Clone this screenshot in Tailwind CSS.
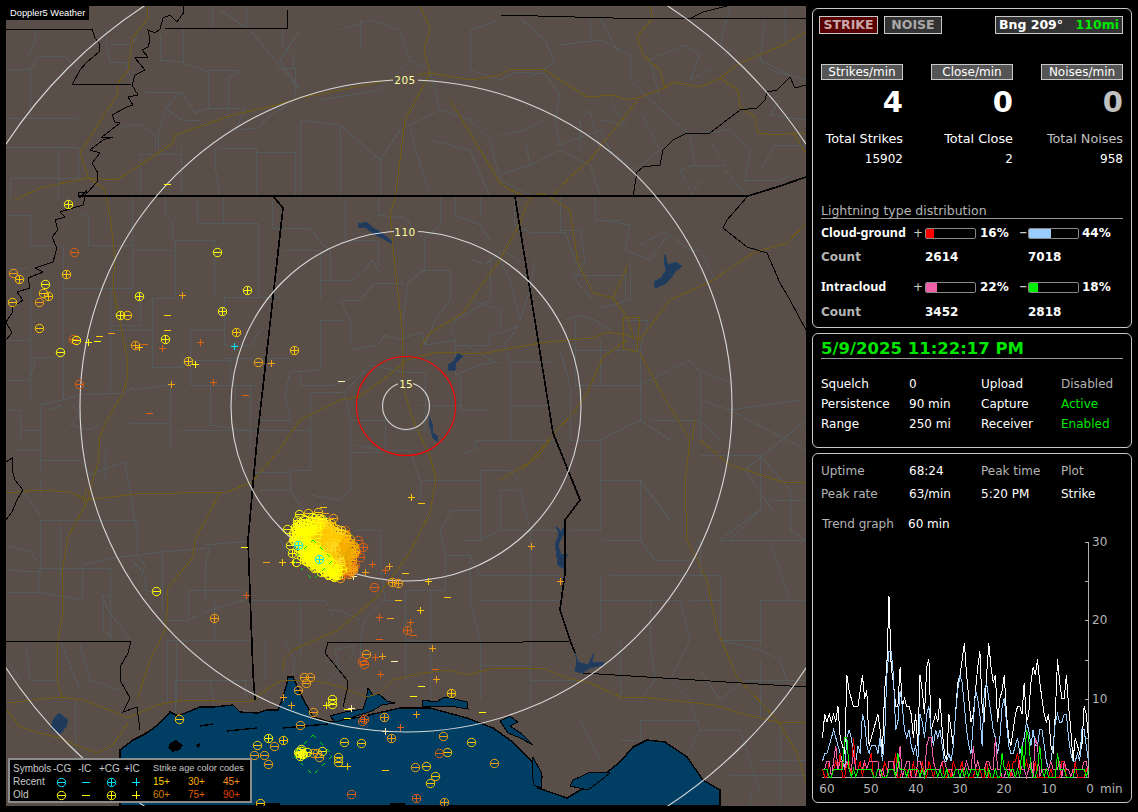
<!DOCTYPE html>
<html lang="en">
<head>
<meta charset="UTF-8">
<title>Doppler5 Weather</title>
<script src="https://cdn.jsdelivr.net/npm/@tailwindcss/browser@4"></script>
</head>
<body class="bg-black text-white font-['DejaVu_Sans',sans-serif] text-[12px] leading-none overflow-hidden">
<div class="flex w-[1138px] h-[812px] p-[6px]">

  <!-- Map -->
  <div class="relative w-[800px] h-[800px] shrink-0 bg-[#5a4e49] overflow-hidden">
    <svg viewBox="6 6 800 800" class="block w-[800px] h-[800px]" fill="none" shape-rendering="crispEdges">
      <!-- County lines -->
      <path stroke="#565b5e" stroke-width="1" d="
      M6 69H30L36 62V56H64L80 70M30 69V118M6 118H78M35 29V42L28 56M106 29V44L110 62H126L132 84M110 44H130L138 37M160 35V60L182 62L208 72V108M183 28V62M208 70H242L228 78V118M246 6V28M212 6V28M277 68H295V94M282 28V45L293 56V68M145 92L182 92L195 113L208 108H240M180 92L166 108L158 132V150M166 108L182 120L200 120M122 127L140 124L155 135V150M6 147H78M78 147V178M58 147V198M10 178V198M10 178H90M140 154H180M181 147V198M140 154V198M218 148H256V196M215 148V166L220 196M256 152H295V196M245 108L236 130L258 128L270 115L293 103
      M132 197V250H172M165 197V215L172 222V240H214V298M175 240V298H152V367H182V355M197 197V223H258V296M223 197V223M88 245V214H82M88 245H132V288H63V400L40 405M63 288V245M6 215H30V245L60 245M6 268H28M30 288V400M6 340H30M30 357H62M110 288V390M110 325H140V288M152 330H110M190 330V385H235V400M190 330H224V297H280M224 297V345H252L260 330M224 358H290M182 367L195 360H230V385M230 385H256M170 385V423H130M170 423V450M250 385V450M132 390L170 385M210 385V425L260 432M180 430H250M40 405V470M40 430H20M50 410L62 405M62 400L80 395L125 393L133 387M73 405L80 415L70 425L90 430L100 425M105 450V480M6 380H30L35 360M6 410H20V440
      M16 450H40V458M40 460H80L90 475L115 465L125 462L130 490L136 530M40 480V492M22 490L40 515M40 520H137V555L145 565L140 580M60 525V580M40 520L40 572L6 570M6 545L30 552L38 562M38 568V592M6 592H38L82 600M82 565V598M38 568H110V640M83 565L112 558L162 552V610M162 552L210 548L205 565V600M205 545L250 541M130 558L145 574L145 590L162 595M110 595L102 595L108 610L130 640M103 595V630L114 640M150 620H188L210 610L244 600M188 590V620M188 590L245 590M167 640V703M214 600V640M167 640H253M176 680H253M176 642V703M80 645L90 680L120 690M60 640L80 690M26 645L30 680M30 680H60M6 660L20 680M75 700V760M175 680V725M210 680L215 710H250M245 680V700
      M272 200V228H310L323 245L330 250V280M283 250H320V300M320 280H352L365 270L372 260L380 273M346 240H378V262M345 197V240M378 197V215L405 218L424 240M424 240L440 225V197M455 197V215L480 225L490 240M480 197V218M424 240V270L408 283L403 320M403 283H375L360 300H340M340 300L350 320L350 345M343 320H320V370L290 372L285 395M285 395L290 420H255M300 373V385L335 385L358 375M350 350L378 345L385 335L400 340M400 340L422 332L425 345M425 345L455 340V375M455 345H488L490 335L510 330L519 325M519 325L505 345L510 362L522 362M470 258L485 265L503 250L520 262M490 258V300M490 300L455 320L450 335M450 300L435 320L425 345M420 270H450V300M500 260L510 280L520 320L530 290L535 260M470 300L500 310V330M522 362H555M510 362V405H553M460 375V410L490 410M460 410L462 405H420M465 345L495 362M455 375L480 365L500 362M402 372H425V400M425 400V430H402M402 372L370 365M370 365L345 392H310V430H255M345 392L350 420H380M380 420H385V450L410 450L420 480V500M350 420V452M310 430V470H290V490L260 490M350 452H385M350 452V490L340 500L310 495M255 472H290M290 490L300 505L320 525M380 450L355 445M420 480H480V470H510L518 480M480 480V540H462M460 455L475 450V440H510M510 405V440M510 440H555M480 540L500 530V490H518M500 530H565M520 490L530 530V575H560M530 575H480L470 555H445L440 530L452 510H480M445 555V590H405M405 590V640H430V590M470 555V600L480 640M530 575V640M500 600H560M480 600L500 600M355 530H380V560L385 600M385 600L365 620L360 640M385 600H405M360 640V670M430 640V700M405 640V680M480 640V700M530 640V705M530 680H578M480 665H530M350 660L355 645L335 650L340 670L325 685M325 660L335 665M325 610H340L360 620M280 540L290 555M250 600H300V640M300 600H325L335 620M265 640V680M285 642L295 660L290 690M300 640V660
      M514 197V225L530 232H565L575 260L590 285M560 197V230L580 230L585 260L575 280L593 300M595 197V220H620M600 220L630 225L625 250L650 260L668 235M630 260L630 300L600 308M640 245L665 232L690 250L700 250L715 280L725 270M572 275H625V300M565 320L580 315L595 320L610 330M575 320V385H640M575 350H640L648 320H625M640 350V385M640 385L640 420L670 440M640 385L690 360L700 372M700 372V440M650 420H700L720 440M600 340V385M560 350L570 385L570 440M570 440H600V480H640L670 520M600 440L640 420M600 480V530H570M640 480V540H602M640 540L655 560H690L700 540M700 540V575H720M720 540L770 540L790 600M720 575V640M720 640L760 650L780 660L790 690M760 645V600L806 600M770 540H806M770 500H806M700 455H760L790 490M760 455V510L730 540M790 490V530L806 540M745 470L806 420M772 510L745 470M760 510L720 540M700 400L730 410L800 400M730 410L806 450M735 385L700 370M600 575V630L590 640M600 600H650V640M650 600L680 600L690 640M690 600H720M610 575H720M620 640V700M650 640L655 680L640 700M690 640L670 680L690 700M720 640H760M700 670L720 700L745 680M760 660V720M745 680L806 680M690 700L700 730H740M640 720H700M640 720V770M580 720L600 760M620 740H640M700 730L680 770M740 730L760 790M780 725V806M760 760H806M730 775H806M750 790V806
      M500 80L516 72L545 74L560 95L555 120L560 145L600 130L610 150L635 170M500 135L525 130L545 120M500 175L530 165L525 140M500 180L530 195M530 165L560 150L590 165L600 195M580 150V120L590 110L600 150M635 170L660 150M610 100L625 125L600 120M650 100L690 135M690 135L695 165L680 170L690 190M640 110L660 150M660 100L650 60L685 45L700 55L690 80M560 45L600 40L630 55L630 80L650 100M690 80L710 70L740 40M745 45L770 70L806 80M765 20L760 60L790 75M600 18L620 55M520 18L545 40L555 62L528 78M700 133L730 130L750 150L745 180L780 180L790 175M725 170L750 200M700 180L690 197M710 140L725 165H690M590 40V18M730 6L720 45M785 6V45M806 120L770 115L780 100M805 145L775 145L760 170M340 30L370 20L400 30L410 60L380 90L320 100M300 90L280 60L300 30M440 110L470 120L490 140L500 180M440 110L430 70L410 60M440 110L400 130L380 160V197M300 120L340 125L380 160M250 30L300 90M300 120V196M340 125V197M430 140L470 150L490 197M470 70L500 80M470 70V30L500 20M410 130L430 197M360 50V20M220 10L250 30"/>
      <!-- Gulf -->
      <path fill="#003f63" stroke="#000" stroke-width="1.4" d="M120 806V750L133 740L147 733L160 723L170 712L178 716L200 707L213 707L233 705L240 712L257 713L267 710L278 710L283 697L287 683L288 677L293 677L300 693L313 717L330 722L360 717L400 708L430 708L467 718L493 728L510 740L533 762L542 777L538 788L567 798L597 780L620 762L633 747L647 740L665 742L687 757L703 780L720 790V806Z"/>
      <g fill="#003f63" stroke="#000" stroke-width="1">
        <path d="M368 688L372 694L380 695L387 701L395 703L382 705L372 711L350 718L335 722L330 716L337 714L345 712L363 709L366 700Z"/>
        <path d="M423 700L436 702L445 697L455 699L467 702L468 709L450 706L435 707L422 706Z"/>
        <path d="M573 780L582 776L590 772L610 773L600 781L588 790L570 786Z"/>
        <path d="M533 757L541 772L541 788L534 785L532 772Z"/>
        <path d="M500 721L510 716L518 722L510 726L522 734L533 745L520 738L508 733Z"/>
      </g>
      <path stroke="#000" stroke-width="1.4" d="M283 728L328 724M227 731L257 728M200 726L213 724M145 733L150 731"/>
      <path fill="#000" d="M170 743L176 740L183 745L180 750L172 752L168 748ZM196 745L200 743L199 749ZM255 803H280V806H255ZM390 803H405V806H390Z"/>
      <!-- Lakes -->
      <g fill="#1f3a5a" stroke="#243f60" stroke-width="1">
        <path d="M358 224L367 222L372 227L380 232L388 238L394 245L384 239L374 234L366 228L358 227Z"/>
        <path d="M458 353L463 356L460 359L456 363L455 370L448 370L449 364L454 361Z"/>
        <path d="M429 416L432 424L432 432L437 436L437 441L433 438L431 430L429 423Z"/>
        <path d="M665 255L668 265L675 262L682 266L675 272L671 278L665 284L655 288L654 282L662 277L666 270L664 262Z"/>
        <path d="M556 526L561 532L565 525L564 533L558 545L561 554L568 555L564 560L566 570L558 565L556 550L555 545L559 534Z"/>
        <path d="M575 652L578 662L588 665L594 653L592 663L603 662L603 665L590 668L582 673L575 671L577 662Z"/>
        <path d="M59 713L68 720L66 727L60 734L51 729L53 720Z"/>
      </g>
      <!-- Highways -->
      <path stroke="#6f5c10" stroke-width="1" d="
      M148 6L147 20L133 37L128 70L118 83L117 95L80 153L88 177L105 190L110 217L115 257L113 287L122 333L127 357L127 380L123 393L107 420L100 437L98 463L92 483L88 500L68 537L62 573L62 617L57 647L57 680L63 700
      M15 200L40 188L87 178L117 180L140 165L173 143L175 135L233 115L277 105L300 98L340 90L400 78L430 73L470 80L500 75L510 69L543 69L557 78L587 97L613 95L627 100L640 97L665 88L673 82L700 87L720 78L740 63L783 45L806 32
      M430 73L424 50L430 28L420 6M430 73L405 120L400 160L395 200L390 213L395 267L402 327L402 350L403 387L412 417L430 457L436 478L430 513L407 557L377 597L338 630L293 650L283 660L283 670
      M250 702L270 687L282 680L305 680L327 683L343 688L367 697L380 693L393 680L423 673L450 670L467 675L493 668L543 668L567 678L590 683L623 698L640 697L687 702L713 705L747 715L777 722L806 723
      M6 493L40 490L70 492L87 500L143 493L177 493L227 492L252 482L277 453L300 420L340 400L358 397L383 380L407 360L437 352L480 354L540 343L567 340L593 338L607 332L627 335L640 340L670 300L710 282L753 253L787 243L806 223
      M420 347L430 333L463 313L478 290L500 260L520 223L527 203L532 198M500 183L510 190L530 198L540 193L552 197L570 177L590 160L603 143L638 100M450 100L500 183
      M665 88L660 70L643 55L637 37L653 18L650 6M550 197L570 210L578 263L593 293L613 298L627 317L633 335M628 265L613 298M627 340L603 357L587 393L573 413L557 430L540 450L522 470M623 317L640 318L637 352L623 348ZM640 353L660 390L690 440L685 483L687 540L707 580L717 630L737 677L777 720L797 753L806 783M700 440L730 465L783 482L806 483M692 440L695 420M720 78L738 90L740 107L755 117L758 133L777 135L793 133L806 153M793 133H806
      M550 440L537 458L513 472L500 480M220 492L195 540L193 557L168 588L167 613L165 630L150 660L137 700M7 703L33 700L60 697L83 700L117 713L127 718L157 705L183 700L250 702M7 710L20 727L40 733L60 738L80 747L97 753L113 745L128 723M87 487L83 503"/>
      <!-- State lines and rivers -->
      <path stroke="#000" stroke-width="1" d="
      M183 6L184 12L177 22L170 15L163 18L160 29L155 33L148 30L150 40L148 47L142 50L148 57L135 58L145 70L135 75L132 85L138 95L128 97L133 105L127 107L112 115L115 122L120 123L102 137L113 137L103 140L90 150L100 153L92 163L98 173L97 182L88 192L78 193L80 198L87 190L83 205L60 212L65 217L55 220L58 230L52 237L57 248L53 262L35 268L43 272L28 278L30 288L17 292L23 300L13 307L12 313L6 322L12 333L6 340
      M6 462L12 458L12 470L15 480L23 490L17 500L12 512L6 520
      M6 29H92L95 38L99 43L99 52L87 62L80 70L72 85L132 84M287 10L288 29L163 28
      M500 15L613 18L806 18M691 18L703 12L727 6
      M767 92L777 90L790 77L795 88L806 85M767 92L765 100L757 108L740 110L710 133L687 133L673 140L663 150L660 165L643 167L637 172L633 197
      M6 641H131L128 653L120 667L120 680L130 698L123 712L137 707L140 730
      M328 642H523L570 641M328 642L325 653L347 680L347 690L343 707
      M583 673L806 687M747 197L727 220L723 228L747 247L767 253L780 283L790 300L806 330"/>
      <path stroke="#000" stroke-width="1.7" d="M78 196H273L283 208L257 440L248 540L253 673L255 700M273 196H748L777 187L806 177M515 197L553 433L557 443L572 480L580 500L565 520L565 573L560 610L570 640L575 653"/>
      <!-- Range rings -->
      <g stroke="#d8d8d8" stroke-width="1.1" shape-rendering="auto">
        <circle cx="406" cy="406" r="478"/>
        <circle cx="406" cy="406" r="326"/>
        <circle cx="406" cy="406" r="175"/>
        <circle cx="406" cy="406" r="23.5"/>
        <circle cx="406" cy="406" r="49.5" stroke="#f00"/>
      </g>
      <g fill="#5a4e49"><rect x="393" y="74" width="25" height="12"/><rect x="394" y="226" width="24" height="12"/><rect x="398" y="378" width="15" height="12"/></g>
      <g fill="#ffffa0" font-size="10.5" text-anchor="middle">
        <text x="405" y="84" letter-spacing="0.5">205</text>
        <text x="405" y="236" letter-spacing="0.5">110</text>
        <text x="406" y="388">15</text>
      </g>
      <!-- Strikes -->
      <g id="strikes"></g>
      <g stroke="#00e000" stroke-width="1" stroke-dasharray="4 6">
        <path d="M313 540L333 560L313 580L293 560Z"/>
        <path d="M313 735L333 755L313 775L293 755Z"/>
      </g>
    </svg>
    <div class="absolute left-0 top-0 bg-black pl-[4px] w-[83px] h-[14px] font-['Liberation_Sans',sans-serif] text-[9.3px] leading-[14px] whitespace-nowrap">Doppler5 Weather</div>
    <!-- Legend -->
    <div class="absolute left-[2px] top-[752px] w-[244px] h-[45px] bg-black border-2 border-[#8c8c8c] font-['Liberation_Sans',sans-serif] text-[#c8c8c8] text-[10px]">
      <div class="grid grid-cols-[40px_25px_21px_25px_29px_35px_35px_30px] grid-rows-[13px_13px_13px] items-center pl-[3px] pt-[2px] whitespace-nowrap">
        <span>Symbols</span><span>-CG</span><span>-IC</span><span>+CG</span><span>+IC</span><span class="col-span-3 text-[9.2px]">Strike age color codes</span>
        <span>Recent</span>
        <svg class="ml-[3px]" width="14" height="12" viewBox="0 0 14 12" fill="none" stroke="#00e5ff"><circle cx="5.5" cy="6.5" r="4.2"/><path shape-rendering="crispEdges" d="M2 6.5H9"/></svg>
        <svg class="ml-[4px]" width="14" height="12" viewBox="0 0 14 12" fill="none" stroke="#00e5ff" shape-rendering="crispEdges"><path d="M0 6.5H8"/></svg>
        <svg class="ml-[7px]" width="14" height="12" viewBox="0 0 14 12" fill="none" stroke="#00e5ff"><circle cx="5.5" cy="6.5" r="4.2"/><path shape-rendering="crispEdges" d="M2 6.5H9M5.5 3V10"/></svg>
        <svg class="ml-[7px]" width="14" height="12" viewBox="0 0 14 12" fill="none" stroke="#00e5ff" shape-rendering="crispEdges"><path d="M1 6.5H9M5.5 2V10"/></svg>
        <span class="text-[#ffd000]">15+</span><span class="text-[#ffaa00]">30+</span><span class="text-[#ff9020]">45+</span>
        <span>Old</span>
        <svg class="ml-[3px]" width="14" height="12" viewBox="0 0 14 12" fill="none" stroke="#ffff00"><circle cx="5.5" cy="6.5" r="4.2"/><path shape-rendering="crispEdges" d="M2 6.5H9"/></svg>
        <svg class="ml-[4px]" width="14" height="12" viewBox="0 0 14 12" fill="none" stroke="#ffff00" shape-rendering="crispEdges"><path d="M0 6.5H8"/></svg>
        <svg class="ml-[7px]" width="14" height="12" viewBox="0 0 14 12" fill="none" stroke="#ffff00"><circle cx="5.5" cy="6.5" r="4.2"/><path shape-rendering="crispEdges" d="M2 6.5H9M5.5 3V10"/></svg>
        <svg class="ml-[7px]" width="14" height="12" viewBox="0 0 14 12" fill="none" stroke="#ffff00" shape-rendering="crispEdges"><path d="M1 6.5H9M5.5 2V10"/></svg>
        <span class="text-[#d88000]">60+</span><span class="text-[#e06000]">75+</span><span class="text-[#e04000]">90+</span>
      </div>
    </div>
  </div>

  <!-- Right column -->
  <div class="w-[320px] ml-[6px] mt-[2px] shrink-0 flex flex-col gap-[5px]">

    <!-- Counters -->
    <div class="h-[320px] border border-[#c8c8c8] rounded-md px-[8px] pt-[7px]">
      <div class="flex items-start font-bold text-[12.5px]">
        <div class="w-[59px] h-[18px] leading-[16px] text-center bg-[#5a0000] border border-[#c8c8c8] text-[#c8a8a8] -ml-[2px]">STRIKE</div>
        <div class="w-[58px] h-[18px] leading-[16px] text-center bg-[#333] border border-[#c8c8c8] text-[#a8a8a8] ml-[6px]">NOISE</div>
        <div class="w-[128px] h-[18px] leading-[16px] flex justify-between px-[3px] bg-[#333] border border-[#c8c8c8] ml-[53px]"><span>Bng 209°</span><span class="text-[#00e600]">110mi</span></div>
      </div>
      <div class="grid grid-cols-[82px_82px_82px] gap-x-[28px] mt-[30px] text-right">
        <div>
          <div class="h-[16px] leading-[14px] text-center bg-[#555] border border-[#c8c8c8]">Strikes/min</div>
          <div class="mt-[8px] h-[29px] leading-[29px] text-[29px] font-bold">4</div>
          <div class="mt-[16px] text-[12.8px] whitespace-nowrap">Total Strikes</div>
          <div class="mt-[7px]">15902</div>
        </div>
        <div>
          <div class="h-[16px] leading-[14px] text-center bg-[#555] border border-[#c8c8c8]">Close/min</div>
          <div class="mt-[8px] h-[29px] leading-[29px] text-[29px] font-bold">0</div>
          <div class="mt-[16px] text-[12.8px] whitespace-nowrap">Total Close</div>
          <div class="mt-[7px]">2</div>
        </div>
        <div class="text-[#c0c0c0]">
          <div class="h-[16px] leading-[14px] text-center bg-[#555] border border-[#c8c8c8] text-white">Noises/min</div>
          <div class="mt-[8px] h-[29px] leading-[29px] text-[29px] font-bold">0</div>
          <div class="mt-[16px] text-[12.8px] whitespace-nowrap">Total Noises</div>
          <div class="mt-[7px] text-white">958</div>
        </div>
      </div>
      <div class="mt-[40px] pb-[1px] border-b border-[#999] text-[12.5px] text-[#b4b4b4]">Lightning type distribution</div>
      <div class="grid grid-cols-[92px_12px_51px_43px_9px_51px_45px] auto-rows-auto items-center mt-[7px] font-bold">
        <span class="h-[14px] leading-[14px] font-['Noto_Sans',sans-serif] text-[12.5px]">Cloud-ground</span><span class="font-normal text-[#ccc]">+</span>
        <div class="h-[11px] border border-[#888] rounded-[2px] overflow-hidden"><div class="h-full bg-[#ff0000]" style="width:16%"></div></div>
        <span class="pl-[4px]">16%</span><span class="text-[#ccc] text-[10px]">−</span>
        <div class="h-[11px] border border-[#888] rounded-[2px] overflow-hidden"><div class="h-full bg-[#99ccff]" style="width:44%"></div></div>
        <span class="pl-[3px]">44%</span>

        <span class="h-[24px] leading-[24px] mt-[5px] text-[#b4b4b4] col-span-2">Count</span>
        <span class="col-span-2 mt-[5px]">2614</span><span></span><span class="col-span-2 mt-[5px]">7018</span>

        <span class="h-[14px] leading-[14px] mt-[11px] font-['Noto_Sans',sans-serif] text-[12.5px]">Intracloud</span><span class="mt-[11px] font-normal text-[#ccc]">+</span>
        <div class="h-[11px] mt-[11px] border border-[#888] rounded-[2px] overflow-hidden"><div class="h-full bg-[#f060a8]" style="width:22%"></div></div>
        <span class="pl-[4px] mt-[11px]">22%</span><span class="mt-[11px] text-[#ccc] text-[10px]">−</span>
        <div class="h-[11px] mt-[11px] border border-[#888] rounded-[2px] overflow-hidden"><div class="h-full bg-[#00f000]" style="width:18%"></div></div>
        <span class="pl-[3px] mt-[11px]">18%</span>

        <span class="h-[24px] leading-[24px] mt-[6px] text-[#b4b4b4] col-span-2">Count</span>
        <span class="col-span-2 mt-[6px]">3452</span><span></span><span class="col-span-2 mt-[6px]">2818</span>
      </div>
    </div>

    <!-- Clock and status -->
    <div class="h-[115px] border border-[#c8c8c8] rounded-md px-[8px] pt-[6px]">
      <div class="h-[19px] pb-[2px] border-b border-[#999] text-[#00e600] font-bold text-[16.5px] leading-[17px]">5/9/2025 11:22:17 PM</div>
      <div class="grid grid-cols-[88px_72px_80px_auto] auto-rows-[20px] items-center mt-[15px]">
        <span>Squelch</span><span>0</span><span>Upload</span><span class="text-[#b4b4b4]">Disabled</span>
        <span>Persistence</span><span>90 min</span><span>Capture</span><span class="text-[#00e600]">Active</span>
        <span>Range</span><span>250 mi</span><span>Receiver</span><span class="text-[#00e600]">Enabled</span>
      </div>
    </div>

    <!-- Peak and trend -->
    <div class="h-[350px] border border-[#c8c8c8] rounded-md">
      <div class="grid grid-cols-[88px_72px_80px_auto] auto-rows-[23px] items-center pl-[8px] pt-[5px] text-[#b4b4b4]">
        <span>Uptime</span><span class="text-white">68:24</span><span>Peak time</span><span>Plot</span>
        <span>Peak rate</span><span class="text-white">63/min</span><span class="text-white">5:20 PM</span><span class="text-white">Strike</span>
      </div>
      <div class="flex pl-[9px] mt-[13px] text-[#b4b4b4]"><span class="w-[86px]">Trend graph</span><span class="text-white">60 min</span></div>
      <svg id="trend" viewBox="813 534 318 266" class="block w-[318px] h-[266px] mt-[4px]" fill="none" shape-rendering="crispEdges">
        <path stroke="#b0b0b0" stroke-width="1" d="M822 777.5H1088.5V542M1085 542H1088M1085 581H1088M1085 620H1088M1085 660H1088M1085 699H1088M1085 738H1088"/>
        <g id="lines" stroke-width="1"></g>
        <g fill="#b4b4b4" font-size="12" shape-rendering="auto">
          <text x="1092" y="546">30</text><text x="1092" y="624">20</text><text x="1092" y="703">10</text>
          <g text-anchor="middle">
            <text x="827" y="793">60</text><text x="871" y="793">50</text><text x="916" y="793">40</text><text x="960" y="793">30</text><text x="1004" y="793">20</text><text x="1049" y="793">10</text><text x="1090" y="793">0</text>
          </g>
          <text x="1100" y="793">min</text>
        </g>
      </svg>
    </div>
  </div>
</div>

<script>
// strike data: x, y, kind (m minus, p plus, cm/cp circled), colour
var Y='#ffff00',G='#ffc800',O='#f5a010',D='#e06010',W='#fff0b0',C='#00e5ff';
var hits=[[68,204,'cp',Y],[74,252,'cm',D],[13,273,'cm',O],[19,279,'cp',G],[66,274,'cp',G],[45,284,'cm',Y],[43,293,'cm',G],[48,296,'cp',G],[39,302,'cm',O],[12,302,'cm',G],[139,296,'cp',Y],[217,252,'cm',Y],[247,290,'cp',Y],[182,295,'p',O],[222,311,'cp',Y],[120,315,'cp',Y],[127,315,'cm',G],[167,315,'m',G],[167,330,'m',G],[39,328,'cm',G],[73,339,'cm',D],[76,340,'cm',Y],[88,342,'p',Y],[97,341,'m',Y],[99,336,'m',G],[111,333,'m',O],[135,345,'cp',O],[139,347,'p',G],[144,344,'m',D],[165,339,'cp',Y],[162,348,'p',D],[200,342,'p',D],[236,332,'cp',G],[234,346,'p',C],[258,362,'cm',O],[271,363,'p',O],[294,350,'cp',G],[188,361,'cp',G],[195,364,'p',Y],[60,352,'cm',Y],[171,384,'p',O],[213,382,'p',D],[79,384,'cm',D],[245,395,'m',D],[149,413,'m',D],[167,184,'m',Y],[341,381,'m',W],
[244,547,'m',Y],[246,595,'p',D],[156,591,'cm',Y],[214,618,'cp',O],[266,562,'m',O],[282,562,'p',G],[293,562,'p',G],[283,697,'p',O],[372,564,'p',D],[365,572,'p',O],[389,566,'p',O],[385,570,'p',D],[405,573,'m',G],[374,587,'cm',D],[392,582,'cp',O],[398,583,'cp',O],[428,581,'p',G],[398,600,'m',G],[447,597,'m',G],[353,576,'p',W],[411,497,'p',G],[421,503,'m',G],[420,610,'p',G],[379,617,'p',D],[390,618,'m',O],[410,622,'p',D],[407,630,'cp',D],[531,546,'p',O],[560,581,'p',O],
[379,639,'m',D],[413,635,'m',D],[432,648,'p',O],[366,654,'cm',O],[362,661,'cm',D],[364,664,'cm',D],[375,657,'p',D],[382,656,'p',O],[394,661,'m',W],[380,674,'p',D],[435,669,'m',D],[436,679,'p',O],[421,686,'m',Y],[413,696,'m',Y],[451,693,'cp',G],[482,712,'m',Y],[304,677,'cm',O],[310,677,'cm',O],[306,683,'cm',O],[298,690,'cm',O],[291,705,'p',O],[313,712,'cm',O],[332,699,'cm',Y],[332,704,'cm',Y],[326,705,'p',Y],[347,709,'m',Y],[351,708,'p',W],[347,718,'m',Y],[384,717,'cp',O],[364,719,'cp',D],[362,721,'cm',D],[416,714,'p',O],[400,727,'p',D],[385,731,'p',W],[391,738,'cp',O],[300,725,'cm',O],[268,738,'cp',Y],[283,740,'cp',G],[274,746,'cm',O],[257,745,'cm',G],[264,755,'cm',O],[254,755,'cm',O],[268,764,'cm',O],[344,742,'cm',G],[361,743,'cm',G],[443,736,'cm',O],[471,742,'cm',G],[447,752,'cm',G],[439,753,'cm',D],[494,763,'cm',O],[338,757,'cm',G],[338,762,'cm',G],[342,766,'m',G],[347,766,'p',G],[385,770,'m',G],[415,767,'cm',O],[426,766,'cm',G],[435,776,'cm',G],[430,783,'cm',G],[351,794,'cm',D],[416,798,'cp',D],[444,802,'cp',O],[260,803,'cm',G],[179,719,'cm',G],[322,751,'cm',Y],[319,757,'cm',O],[317,753,'cm',O],[313,753,'cm',O],[307,752,'cm',Y],
[323,507,'m',G],[325,513,'m',O],[299,514,'cm',Y],[308,513,'cm',G],[287,529,'cm',Y],[297,520,'cm',Y],[300,528,'cp',G],[294,536,'cm',Y],[290,545,'cm',Y],[292,553,'cp',Y],[296,562,'cm',Y],[318,512,'cm',G],[333,518,'cm',O],[345,530,'cm',D],[358,540,'cm',D],[363,547,'cp',D],[360,557,'cm',D],[355,565,'cp',D],[335,575,'cm',O],[324,571,'cp',Y],[340,578,'cm',O]];

function sym(x,y,k,c){
  var s='<g stroke="'+c+'" stroke-width="1">',px=x+0.5,py=y+0.5;
  if(k[0]=='c')s+='<circle shape-rendering="auto" cx="'+px+'" cy="'+py+'" r="4.2"/>';
  s+='<path d="M'+(px-3.5)+' '+py+'H'+(px+3.5);
  if(k[k.length-1]=='p')s+='M'+px+' '+(py-3.5)+'V'+(py+3.5);
  return s+'"/></g>';
}

// seeded random, so the picture is the same on every run
var seed=4711;
function rnd(){seed=(seed*16807)%2147483647;return seed/2147483647;}

// storm cell, old strikes first
var cell=[];
for(var i=0;i<430;i++){
  var a=rnd()*6.283,r=Math.pow(rnd(),0.62),u=r*Math.cos(a),v=r*Math.sin(a);
  var x=Math.round(325+u*37*0.77-v*24*0.64),y=Math.round(547+u*37*0.64+v*24*0.77);
  var c=G,o=1,u2=u+(rnd()-0.5)*0.35,v2=v+(rnd()-0.5)*0.35;
  if(u2>0.7){c=rnd()<0.6?D:O;o=0}
  else if(u2>0.2&&v2<0.15){c=rnd()<0.5?'#e8a800':'#ffb000';o=1}
  else if(v2>0.3||u2<-0.55){c=Y;o=3}
  else{c=rnd()<0.5?G:'#ffd820';o=2}
  cell.push([o,x,y,c,rnd()<0.6?'cm':'cp']);
}
cell.sort(function(p,q){return p[0]-q[0]});
var out=hits.map(function(h){return sym(h[0],h[1],h[2],h[3])}).join('');
cell.forEach(function(h){out+=sym(h[1],h[2],h[4],h[3])});
out+=sym(298,545,'cp',C)+sym(319,559,'cp',C);
for(i=0;i<8;i++){out+=sym(Math.round(297+rnd()*6),Math.round(748+rnd()*9),rnd()<0.5?'cm':'cp',Y)}
document.getElementById('strikes').innerHTML=out;

// trend graph, half minute samples
var white=[5,8,7,8,7,8,7,9,5,4,3,13,11,10,9,9,9,11,13,10,11,4,5,6,7,8,6,3,11,14,23,14,12,9,9,14,9,10,9,9,8,5,8,4,13,11,8,14,15,6,7,8,7,10,6,3,2,8,6,4,8,12,13,15,17,13,10,7,8,11,14,16,9,7,13,17,14,12,13,7,10,11,13,8,5,4,6,8,9,9,8,12,7,8,12,14,13,15,12,10,8,7,8,4,3,8,15,12,10,10,13,9,6,2,5,4,3,4,9,8,5];
var blue=[2,3,3,4,5,6,5,4,3,2,1,5,6,5,3,2,4,3,8,7,4,3,4,4,4,3,5,2,5,13,16,16,13,6,7,11,9,6,5,6,4,3,4,2,8,7,5,8,9,6,4,6,5,6,4,2,2,3,2,4,8,11,13,12,9,6,4,3,7,11,10,8,4,11,12,10,8,6,5,3,5,9,10,7,4,3,3,4,5,3,4,5,7,6,4,6,4,4,6,6,4,2,1,2,4,7,8,7,7,8,8,5,3,2,2,3,2,6,6,4,2];
function noise(base,spread,spikes){
  var a=[];
  for(var i=0;i<121;i++){a.push(spikes[i]||Math.max(0,Math.round(base+rnd()*spread-spread/2)))}
  return a;
}
var red=noise(0.7,2.6,{8:3,14:5,22:3,33:3,88:3});
var pink=noise(1.2,2.2,{6:4,14:3,35:4,47:4,48:5,49:5,68:4,78:5,96:5,97:4});
var green=noise(0.6,1.8,{10:5,11:5,34:3,81:3,90:4,92:6,93:5,98:4,106:3});
function plot(vals,col){
  var pts=vals.map(function(v,i){return (822.5+i*2.217).toFixed(1)+','+(777-v*7.85).toFixed(1)}).join(' ');
  return '<polyline points="'+pts+'" stroke="'+col+'"/>';
}
document.getElementById('lines').innerHTML=plot(white,'#ffffff')+plot(blue,'#99ccff')+plot(red,'#ff0000')+plot(pink,'#f060a8')+plot(green,'#00f000');
</script>
</body>
</html>
